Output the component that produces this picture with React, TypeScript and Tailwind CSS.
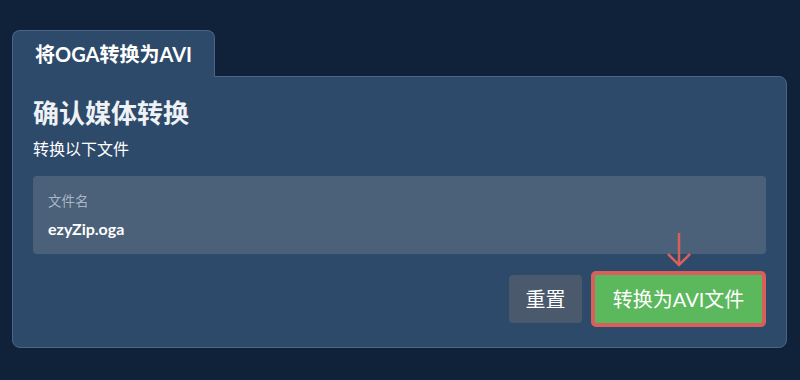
export default function App() {
  const font = { fontFamily: 'Lato, "Noto Sans CJK SC", sans-serif' };
  return (
    <div className="h-[380px] w-[800px] bg-[#10223a] pl-3 pr-[13px] pt-[30px]" style={font}>
      <div className="flex flex-col">
        {/* tab */}
        <div className="relative z-10 -mb-px flex h-[47px] w-[203px] items-center rounded-t-lg border border-b-0 border-[#4b6584] bg-[#2d4a6a] pl-[22px]">
          <span className="text-[20px] font-bold text-white">将OGA转换为AVI</span>
        </div>
        {/* panel */}
        <div className="h-[272px] rounded-tr-lg rounded-b-lg border border-[#4b6584] bg-[#2d4a6a] px-5 pt-[19px]">
          <h2 className="text-[26px] font-bold leading-[34px] text-[#eef1f5]">确认媒体转换</h2>
          <p className="mt-[9px] text-[16px] leading-5 text-white">转换以下文件</p>
          <div className="mt-[17px] h-[78px] rounded bg-[#4b6079] px-[15px] pt-[16px]">
            <div className="text-[13.5px] leading-[18px] text-[#aab6c5]">文件名</div>
            <div className="mt-[9px] text-[16px] font-bold leading-5 text-white">ezyZip.oga</div>
          </div>
          <div className="mt-[17px] flex items-center justify-end gap-[9px]">
            <button className="h-[48px] w-[73px] rounded bg-[#4a5a6c] text-[20px] text-white">重置</button>
            <div className="relative">
              <svg className="absolute -top-[39px] left-[74px]" width="28" height="36" viewBox="0 0 28 36">
                <path d="M14 1 V33 M3 22 L14 33 L25 22" fill="none" stroke="#d9605a" strokeWidth="2.5" />
              </svg>
              <button className="h-[56px] w-[175px] rounded-[5px] border-4 border-[#d9605a] bg-[#5cb85c] text-[20px] text-white">
                转换为AVI文件
              </button>
            </div>
          </div>
        </div>
      </div>
    </div>
  );
}
